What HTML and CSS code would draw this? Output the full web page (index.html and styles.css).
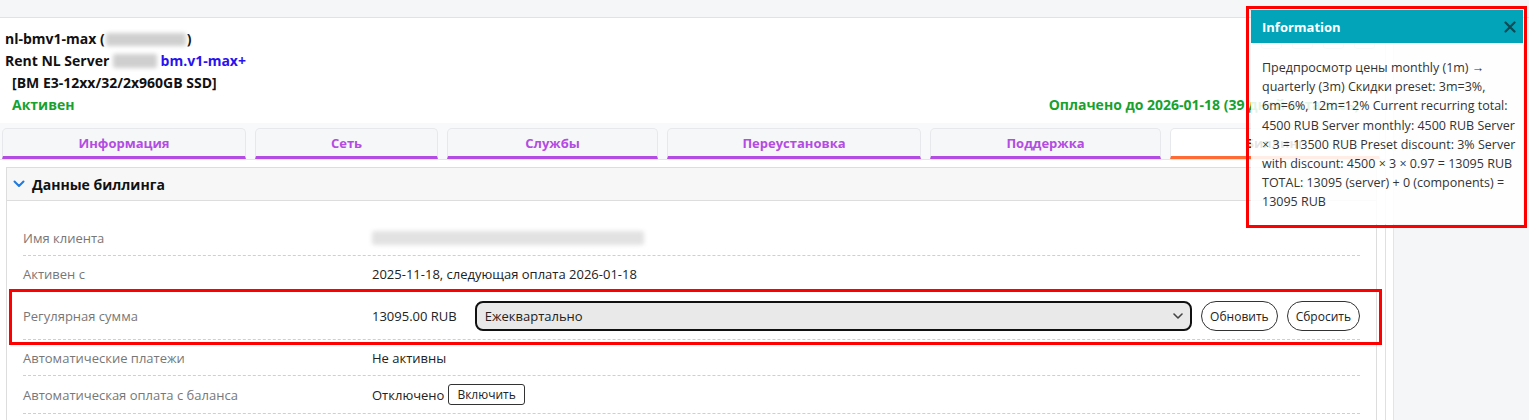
FILE: index.html
```html
<!DOCTYPE html>
<html lang="ru">
<head>
<meta charset="utf-8">
<title>nl-bmv1-max — Биллинг</title>
<link rel="stylesheet" href="styles.css">
</head>
<body>
<div class="topbar"></div>
<div class="page">
  <main class="main">
    <header class="server-head">
      <div class="head-line">
        <div class="title">nl-bmv1-max (<span class="blur blur-ip"></span>)</div>
        <div class="head-actions">
          <span class="icon-btn"></span><span class="icon-btn"></span><span class="icon-btn"></span><span class="icon-btn"></span>
        </div>
      </div>
      <div class="title">Rent NL Server <span class="blur blur-id"></span> <a class="plan" href="#">bm.v1-max+</a></div>
      <div class="title spec">[BM E3-12xx/32/2x960GB SSD]</div>
      <div class="status-line">
        <span class="status">Активен</span>
        <span class="status paid">Оплачено до 2026-01-18 (39 дней осталось)</span>
      </div>
    </header>

    <nav class="tabs">
      <a class="tab" href="#">Информация</a>
      <a class="tab" href="#">Сеть</a>
      <a class="tab" href="#">Службы</a>
      <a class="tab" href="#">Переустановка</a>
      <a class="tab" href="#">Поддержка</a>
      <a class="tab active" href="#">Биллинг</a>
    </nav>

    <section class="card">
      <div class="card-head">
        <svg class="chev" width="12" height="8" viewBox="0 0 12 8"><path d="M1.5 1.5 L6 6 L10.5 1.5" fill="none" stroke="#1e7be0" stroke-width="2" stroke-linecap="round" stroke-linejoin="round"/></svg>
        <span>Данные биллинга</span>
      </div>
      <div class="card-body">
        <div class="row">
          <div class="label">Имя клиента</div>
          <div class="value"><span class="blur blur-name"></span></div>
        </div>
        <div class="row">
          <div class="label">Активен с</div>
          <div class="value">2025-11-18, следующая оплата 2026-01-18</div>
        </div>
        <div class="row row-amount">
          <div class="label">Регулярная сумма</div>
          <div class="value amount">
            <span class="sum">13095.00 RUB</span>
            <div class="select-wrap">
              <select class="period">
                <option>Ежеквартально</option>
              </select>
              <svg class="select-arrow" width="10" height="6" viewBox="0 0 10 6"><path d="M1 1 L5 5 L9 1" fill="none" stroke="#444" stroke-width="1.6" stroke-linecap="round" stroke-linejoin="round"/></svg>
            </div>
            <button class="pill">Обновить</button>
            <button class="pill">Сбросить</button>
          </div>
        </div>
        <div class="row">
          <div class="label">Автоматические платежи</div>
          <div class="value">Не активны</div>
        </div>
        <div class="row">
          <div class="label">Автоматическая оплата с баланса</div>
          <div class="value">Отключено <button class="small-btn">Включить</button></div>
        </div>
      </div>
    </section>
  </main>
  <aside class="side"></aside>
</div>

<div class="toast">
  <div class="toast-head">
    <span>Information</span>
    <svg class="toast-close" width="12" height="12" viewBox="0 0 12 12"><path d="M1.5 1.5 L10.5 10.5 M10.5 1.5 L1.5 10.5" stroke="#0d4a54" stroke-width="2.2" stroke-linecap="round"/></svg>
  </div>
  <div class="toast-body">Предпросмотр цены monthly (1m) → quarterly (3m) Скидки preset: 3m=3%, 6m=6%, 12m=12% Current recurring total: 4500 RUB Server monthly: 4500 RUB Server × 3 = 13500 RUB Preset discount: 3% Server with discount: 4500 × 3 × 0.97 = 13095 RUB TOTAL: 13095 (server) + 0 (components) = 13095 RUB</div>
</div>

<div class="mark mark-toast"></div>
<div class="mark mark-row"></div>
</body>
</html>
```

FILE: styles.css
```css
* { box-sizing: border-box; }

html, body { height: 100%; }

body {
  margin: 0;
  font-family: "Open Sans", "Noto Sans", sans-serif;
  font-size: 13px;
  color: #212529;
  background: #fff;
  overflow: hidden;
}

.topbar {
  height: 18px;
  background: #f4f6f8;
  border-bottom: 1px solid #dce3e9;
}

.page {
  display: flex;
  min-height: 402px;
}

.main {
  flex: none;
  width: 1386px;
  border-right: 1px solid #e0e0e0;
}

.side {
  flex: 1;
  margin-left: 7px;
  background: #f5f6f8;
  border-left: 1px solid #e2e4e7;
}

/* header */
.server-head {
  padding: 10px 8px 0 5px;
}

.head-line {
  display: flex;
  justify-content: space-between;
  align-items: center;
}

.title {
  font-size: 14px;
  font-weight: 700;
  line-height: 22px;
  color: #111;
}

.spec { padding-left: 7px; }

.plan {
  color: #2a12f0;
  text-decoration: none;
}

.blur {
  display: inline-block;
  vertical-align: middle;
  background: #cfcfcf;
  filter: blur(2px);
  border-radius: 2px;
}
.blur-ip { width: 80px; height: 13px; margin: -2px 1px 0; }
.blur-id { width: 44px; height: 14px; margin: -2px 0 0; }
.blur-name { width: 272px; height: 14px; background: #e2e2e2; }

.head-actions {
  display: flex;
  gap: 10px;
  padding-right: 2px;
}
.icon-btn {
  width: 21px;
  height: 20px;
  border: 1px solid #cfd4da;
  border-radius: 3px;
  background: #fff;
}

.status-line {
  display: flex;
  justify-content: space-between;
  padding: 0 18px 0 7px;
}

.status {
  font-size: 14px;
  font-weight: 700;
  line-height: 22px;
  color: #17a12e;
}

/* tabs */
.tabs {
  margin-top: 7px;
  padding: 5px 0 0 2px;
  background: #f8f9fa;
  border-bottom: 1px solid #e3e5e8;
  display: grid;
  grid-template-columns: 244px 183px 211px 254px 231px 1fr;
  gap: 9px;
}

.tab {
  height: 31px;
  display: flex;
  align-items: center;
  justify-content: center;
  background: #f6f7f9;
  border: 1px solid #e6e8eb;
  border-bottom: 3px solid #b24ce2;
  border-radius: 5px 5px 0 0;
  color: #b24ce2;
  font-weight: 700;
  font-size: 13px;
  text-decoration: none;
}

.tab.active {
  background: #fff;
  color: #333;
  border-bottom-color: #ff6b35;
  margin-right: 5px;
}

/* card */
.card {
  margin: 7px 8px 0 6px;
  border: 1px solid #ddd;
  border-bottom: none;
  min-height: 260px;
}

.card-head {
  height: 33px;
  display: flex;
  align-items: center;
  gap: 7px;
  padding-left: 6px;
  background: #f7f7f7;
  border-bottom: 1px solid #ddd;
  font-size: 14px;
  font-weight: 700;
  color: #111;
}

.card-body {
  padding: 19px 16px 0;
}

.row {
  display: grid;
  grid-template-columns: 349px 1fr;
  align-items: center;
  min-height: 36px;
  padding: 7px 0;
  border-bottom: 1px dashed #cfcfcf;
}

.label {
  color: #777;
}

.value {
  color: #222;
  display: flex;
  align-items: center;
  gap: 4px;
}

.row-amount { padding: 9px 0 8px; }

.row:last-child { padding: 8px 0; }

.amount { gap: 9px; }

.sum { margin-right: 9px; }

.select-wrap {
  position: relative;
  flex: 1;
  display: flex;
}

.period {
  flex: 1;
  appearance: none;
  -webkit-appearance: none;
  height: 30px;
  padding: 0 30px 0 8px;
  border: 2px solid #111;
  border-radius: 8px;
  background: #e9e9e9;
  font-family: inherit;
  font-size: 13px;
  color: #222;
}

.select-arrow {
  position: absolute;
  right: 9px;
  top: 12px;
  pointer-events: none;
}

.pill {
  height: 30px;
  padding: 0 8px;
  border: 1px solid #333;
  border-radius: 15px;
  background: #fff;
  font-family: inherit;
  font-size: 12px;
  color: #222;
}

.small-btn {
  height: 21px;
  padding: 0 8px;
  border: 1px solid #333;
  border-radius: 3px;
  background: #fff;
  font-family: inherit;
  font-size: 12px;
  color: #222;
}

/* toast */
.toast {
  position: absolute;
  left: 1251px;
  top: 10px;
  width: 272px;
}

.toast-head {
  height: 33px;
  display: flex;
  align-items: center;
  justify-content: space-between;
  padding: 0 7px 0 11px;
  background: #02a4ba;
  color: #fff;
  font-size: 13px;
  font-weight: 700;
}

.toast-body {
  padding: 15px 3px 12px 11px;
  background: rgba(255, 255, 255, 0.88);
  font-size: 12.5px;
  line-height: 19.2px;
  color: #333;
}

/* annotation outlines */
.mark {
  position: absolute;
  border: 3px solid #f00;
  pointer-events: none;
}
.mark-toast { left: 1246px; top: 6px; width: 281px; height: 222px; }
.mark-row { left: 9px; top: 289px; width: 1373px; height: 56px; }
```
